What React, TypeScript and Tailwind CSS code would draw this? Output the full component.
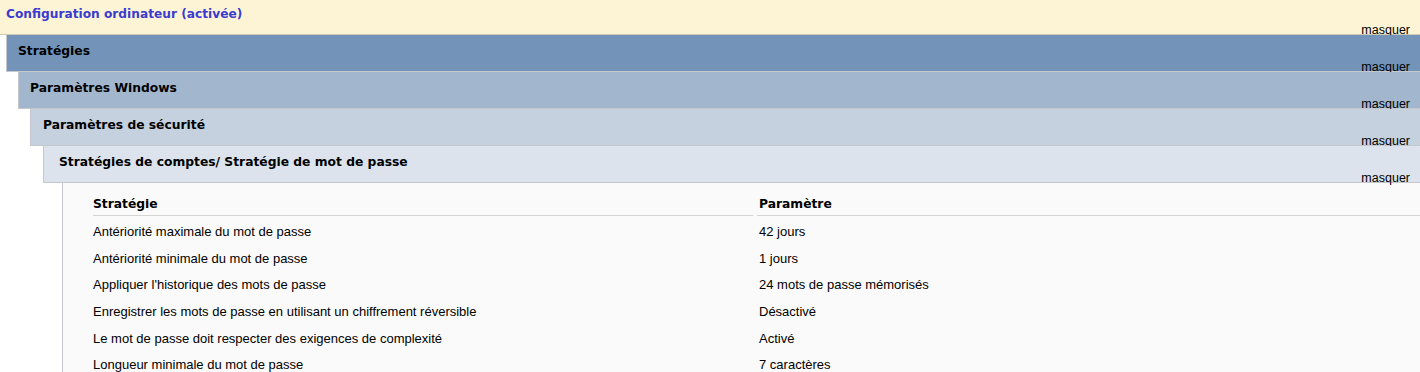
const rows = [
  ["Antériorité maximale du mot de passe", "42 jours"],
  ["Antériorité minimale du mot de passe", "1 jours"],
  ["Appliquer l'historique des mots de passe", "24 mots de passe mémorisés"],
  ["Enregistrer les mots de passe en utilisant un chiffrement réversible", "Désactivé"],
  ["Le mot de passe doit respecter des exigences de complexité", "Activé"],
  ["Longueur minimale du mot de passe", "7 caractères"],
];

const Masquer = () => (
  <span className="absolute right-[10px] bottom-[-2px] text-[12.5px] leading-none text-black">masquer</span>
);

const Bar = ({ title, indent, pad, bg }: { title: string; indent: string; pad: string; bg: string }) => (
  <div className={`relative h-[37px] border-l border-b border-[#c4c8cc] ${indent} ${bg}`}>
    <div className={`pt-[7px] font-['DejaVu_Sans',sans-serif] text-[12.3px] font-bold text-black ${pad}`}>{title}</div>
    <Masquer />
  </div>
);

export default function App() {
  return (
    <div className="w-[1420px] h-[372px] overflow-hidden bg-white font-['Liberation_Sans',Arial,sans-serif]">
      <div className="relative h-[35px] border-b border-[#cfcab6] bg-[#fdf4d5]">
        <div className="pl-[6px] pt-[5px] font-['DejaVu_Sans',sans-serif] text-[12.2px] font-bold text-[#3b3bd0]">Configuration ordinateur (activée)</div>
        <Masquer />
      </div>
      <Bar title="Stratégies" indent="ml-[6px]" pad="pl-[11px]" bg="bg-[#7394b8]" />
      <Bar title="Paramètres Windows" indent="ml-[18px]" pad="pl-[11px]" bg="bg-[#a2b7ce]" />
      <Bar title="Paramètres de sécurité" indent="ml-[30px]" pad="pl-[12px]" bg="bg-[#c5d1df]" />
      <Bar title="Stratégies de comptes/ Stratégie de mot de passe" indent="ml-[43px]" pad="pl-[15px]" bg="bg-[#dce3ec]" />
      <div className="ml-[62px] h-[200px] border-l border-[#c4c8cc] bg-[#fafafa] pl-[30px] text-[13px] text-black">
        <div className="flex pt-[12px] font-['DejaVu_Sans',sans-serif] text-[12.3px] font-bold">
          <div className="w-[660px] border-b border-[#d4d4d4] pb-[2px]">Stratégie</div>
          <div className="ml-[4px] flex-1 border-b border-[#d4d4d4] pb-[2px] pl-[2px]">Paramètre</div>
        </div>
        <div className="mt-[2px]">
          {rows.map(([k, v]) => (
            <div key={k} className="flex h-[26.7px] items-center">
              <div className="w-[666px]">{k}</div>
              <div>{v}</div>
            </div>
          ))}
        </div>
      </div>
    </div>
  );
}
